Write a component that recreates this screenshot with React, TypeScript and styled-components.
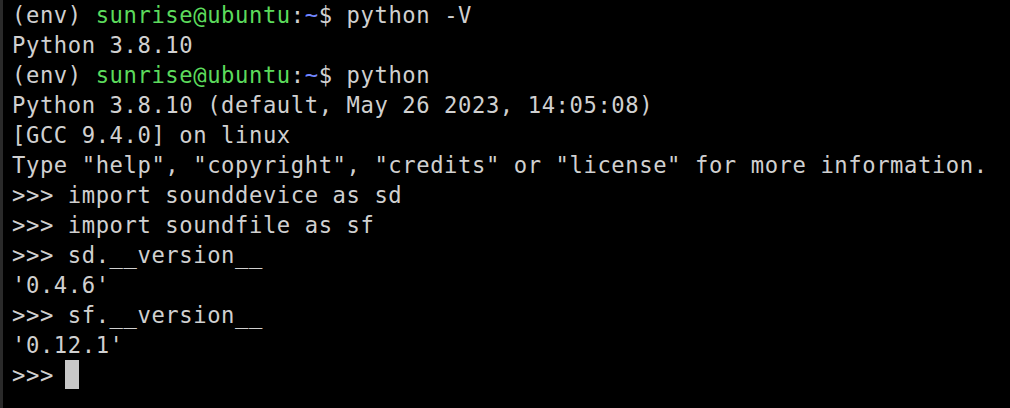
import React from 'react'
import styled, { createGlobalStyle } from 'styled-components'

const GlobalStyle = createGlobalStyle`
  html, body {
    margin: 0;
    padding: 0;
    background: #000;
  }
`;

const Terminal = styled.div`
  width: 1010px;
  height: 408px;
  box-sizing: border-box;
  background: #000;
  border-left: 3px solid #2a2a2a;
  padding: 0 0 0 9px;
  overflow: hidden;
  font-family: "DejaVu Sans Mono", "Liberation Mono", monospace;
  font-size: 22.2px;
  letter-spacing: 0.58px;
  color: #d0d0d0;
`;

const Line = styled.div`
  height: 30px;
  line-height: 30px;
  white-space: pre;
`;

const User = styled.span`
  color: #5cdb5c;
`;

const Path = styled.span`
  color: #7286ff;
`;

const Cursor = styled.span`
  display: inline-block;
  width: 14px;
  height: 29px;
  margin-left: -3px;
  background: #c8c8c8;
  vertical-align: top;
`;

const Prompt = ({ cmd }: { cmd: string }) => (
  <Line>
    (env) <User>sunrise@ubuntu</User>:<Path>~</Path>$ {cmd}
  </Line>
)

const output = [
  'Python 3.8.10 (default, May 26 2023, 14:05:08)',
  '[GCC 9.4.0] on linux',
  'Type "help", "copyright", "credits" or "license" for more information.',
  '>>> import sounddevice as sd',
  '>>> import soundfile as sf',
  '>>> sd.__version__',
  "'0.4.6'",
  '>>> sf.__version__',
  "'0.12.1'",
]

export default function App() {
  return (
    <>
      <GlobalStyle />
      <Terminal>
        <Prompt cmd="python -V" />
        <Line>Python 3.8.10</Line>
        <Prompt cmd="python" />
        {output.map((l, i) => (
          <Line key={i}>{l}</Line>
        ))}
        <Line>
          {'>>> '}
          <Cursor />
        </Line>
      </Terminal>
    </>
  )
}
